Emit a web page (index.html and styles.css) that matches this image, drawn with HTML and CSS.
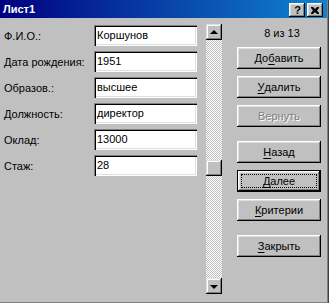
FILE: index.html
```html
<!DOCTYPE html>
<html>
<head>
    <title>Лист1</title>
    <link rel="stylesheet" href="styles.css">
</head>
<body>
    <div class="window">
        <div class="titlebar">
            <span class="title">Лист1</span>
            <div class="caption-buttons">
                <div class="caption-btn help">?</div>
                <div class="caption-btn close">
                    <svg width="8" height="7" viewBox="0 0 8 7">
                        <path d="M0 0h2l2 2 2-2h2v1L6 3.5 8 6v1H6L4 5 2 7H0V6l2-2.5L0 1z" fill="#000"/>
                    </svg>
                </div>
            </div>
        </div>

        <div class="content">
            <div class="fields">
                <div class="field">
                    <span class="label">Ф.И.О.:</span>
                    <div class="input">Коршунов</div>
                </div>
                <div class="field">
                    <span class="label">Дата рождения:</span>
                    <div class="input">1951</div>
                </div>
                <div class="field">
                    <span class="label">Образов.:</span>
                    <div class="input">высшее</div>
                </div>
                <div class="field">
                    <span class="label">Должность:</span>
                    <div class="input">директор</div>
                </div>
                <div class="field">
                    <span class="label">Оклад:</span>
                    <div class="input">13000</div>
                </div>
                <div class="field">
                    <span class="label">Стаж:</span>
                    <div class="input">28</div>
                </div>
            </div>

            <div class="scrollbar">
                <div class="sb-btn"><span class="arrow up"></span></div>
                <div class="sb-track">
                    <div class="sb-thumb"></div>
                </div>
                <div class="sb-btn"><span class="arrow down"></span></div>
            </div>

            <div class="actions">
                <div class="counter">8 из 13</div>
                <div class="group">
                    <div class="btn">До<u>б</u>авить</div>
                    <div class="btn"><u>У</u>далить</div>
                    <div class="btn disabled">Вернуть</div>
                </div>
                <div class="group">
                    <div class="btn"><u>Н</u>азад</div>
                    <div class="btn default"><span class="focus"><u>Д</u>алее</span></div>
                    <div class="btn"><u>К</u>ритерии</div>
                </div>
                <div class="group">
                    <div class="btn"><u>З</u>акрыть</div>
                </div>
            </div>
        </div>
    </div>
</body>
</html>
```

FILE: styles.css
```css
body {
    margin: 0;
    font-family: 'Liberation Sans', Arial, sans-serif;
    font-size: 11px;
    color: #000;
    background-color: #c0c0c0;
}

.window {
    width: 329px;
    height: 303px;
    box-sizing: border-box;
    background-color: #c0c0c0;
    box-shadow: inset -1px 0 #404040, inset -2px -1px #808080;
    overflow: hidden;
}

.titlebar {
    width: 327px;
    height: 18px;
    display: flex;
    justify-content: space-between;
    background: linear-gradient(to right, #000080, #1084d0);
}

.title {
    color: #fff;
    font-weight: bold;
    line-height: 18px;
    padding-left: 3px;
}

.caption-buttons {
    display: flex;
    gap: 2px;
    padding: 3px 4px 0 0;
}

.caption-btn {
    width: 16px;
    height: 14px;
    box-sizing: border-box;
    background-color: #c0c0c0;
    box-shadow: inset -1px -1px #000, inset 1px 1px #fff, inset -2px -2px #808080, inset 2px 2px #dfdfdf;
    display: flex;
    align-items: center;
    justify-content: center;
}

.help {
    font-weight: bold;
    font-size: 11px;
    line-height: 14px;
    padding-left: 1px;
}

.close svg {
    display: block;
    margin-left: 0;
}

.content {
    display: flex;
    padding: 6px 0 0 4px;
}

/* left column with field rows */
.fields {
    width: 193px;
    margin-top: 1px;
    margin-right: 9px;
    display: flex;
    flex-direction: column;
    gap: 5px;
}

.field {
    display: flex;
    align-items: center;
    height: 21px;
}

.label {
    width: 90px;
    padding-top: 1px;
}

.input {
    width: 103px;
    height: 21px;
    box-sizing: border-box;
    background-color: #fff;
    padding-left: 3px;
    line-height: 21px;
    box-shadow: inset 1px 1px #808080, inset 2px 2px #000, inset -1px -1px #fff, inset -2px -2px #dfdfdf;
}

/* vertical scrollbar */
.scrollbar {
    width: 16px;
    height: 270px;
    display: flex;
    flex-direction: column;
    margin-right: 15px;
}

.sb-btn,
.sb-thumb {
    width: 16px;
    height: 16px;
    box-sizing: border-box;
    background-color: #c0c0c0;
    box-shadow: inset -1px -1px #000, inset 1px 1px #dfdfdf, inset -2px -2px #808080, inset 2px 2px #fff;
    display: flex;
    align-items: center;
    justify-content: center;
}

.sb-track {
    flex: 1;
    background: repeating-conic-gradient(#fff 0 25%, #c0c0c0 0 50%) 0 0 / 2px 2px;
}

.sb-thumb {
    margin-top: 120px;
}

.arrow {
    width: 0;
    height: 0;
    border-left: 4px solid transparent;
    border-right: 4px solid transparent;
}

.arrow.up {
    border-bottom: 4px solid #000;
    margin-top: -1px;
}

.arrow.down {
    border-top: 4px solid #000;
    margin-top: 1px;
}

/* right column with buttons */
.actions {
    width: 84px;
    display: flex;
    flex-direction: column;
    gap: 14px;
}

.counter {
    height: 9px;
    line-height: 19px;
    text-align: center;
    padding-left: 6px;
}

.group {
    display: flex;
    flex-direction: column;
    gap: 7px;
}

.btn {
    height: 22px;
    box-sizing: border-box;
    display: flex;
    align-items: center;
    justify-content: center;
    background-color: #c0c0c0;
    box-shadow: inset -1px -1px #000, inset 1px 1px #fff, inset -2px -2px #808080, inset 2px 2px #dfdfdf;
}

.btn u {
    text-decoration-thickness: 1px;
    text-underline-offset: 2px;
}

.btn.disabled {
    color: #808080;
    text-shadow: 1px 1px #fff;
}

.btn.default {
    padding: 4px;
    box-shadow: inset 0 0 0 1px #000, inset -2px -2px #000, inset 2px 2px #fff, inset -3px -3px #808080, inset 3px 3px #dfdfdf;
}

.focus {
    flex: 1;
    align-self: stretch;
    display: flex;
    align-items: center;
    justify-content: center;
    border: 1px dotted #000;
}
```
